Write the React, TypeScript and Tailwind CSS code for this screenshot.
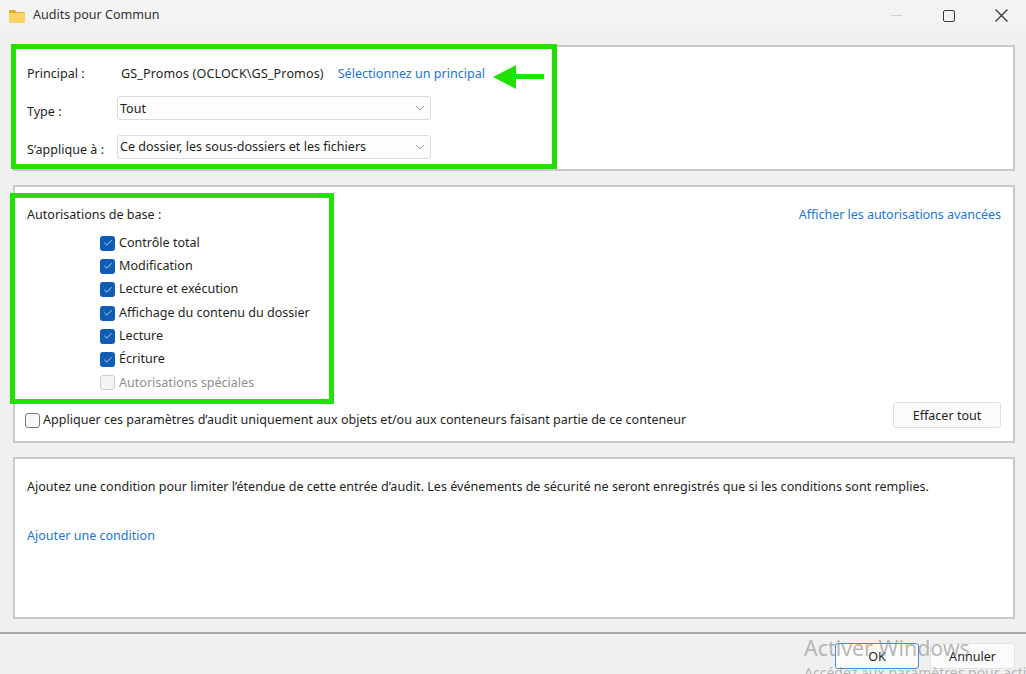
import { Check, ChevronDown } from 'lucide-react';

const permissions = [
  'Contrôle total',
  'Modification',
  'Lecture et exécution',
  'Affichage du contenu du dossier',
  'Lecture',
  'Écriture',
];

function Box({ checked, disabled }: { checked?: boolean; disabled?: boolean }) {
  if (checked) {
    return (
      <span className="w-[15px] h-[15px] shrink-0 rounded-[3px] bg-[#0f5cb5] flex items-center justify-center">
        <Check className="w-[10px] h-[10px] text-[#dbe9f8]" strokeWidth={2} />
      </span>
    );
  }
  return (
    <span
      className={`w-[15px] h-[15px] shrink-0 rounded-[3px] border ${
        disabled ? 'border-[#cfcfcf] bg-[#f4f4f4]' : 'border-[#7a7a7a] bg-[#f7f7f7]'
      }`}
    />
  );
}

function Select({ value }: { value: string }) {
  return (
    <div className="w-[314px] h-[24px] flex items-center justify-between pl-[2px] pr-[3px] bg-[#fdfdfd] border border-[#dcdcdc] rounded-[3px]">
      <span className="pt-[2px]">{value}</span>
      <ChevronDown className="w-[14px] h-[14px] text-[#6b6b6b]" strokeWidth={1.3} />
    </div>
  );
}

export default function App() {
  return (
    <div className="relative w-[1026px] h-[674px] overflow-hidden flex flex-col bg-[#f0f0f0] text-[#1f1f1f] text-[12.55px] font-['Noto_Sans',sans-serif]">
      {/* Title bar */}
      <div className="h-[31px] shrink-0 flex items-center bg-[#f3f3f3] pl-[9px]">
        <svg width="16" height="14" viewBox="0 0 16 14" className="shrink-0">
          <path d="M0 2a1 1 0 0 1 1-1h5l1.5 2H15a1 1 0 0 1 1 1v1H0z" fill="#e8a92f" />
          <path d="M0 4h16v9a1 1 0 0 1-1 1H1a1 1 0 0 1-1-1z" fill="#fbd265" />
        </svg>
        <span className="ml-[8px] -mt-[1px] text-[#333333]">Audits pour Commun</span>
        <div className="ml-auto flex items-center pr-[18px]">
          <span className="w-[11px] h-px bg-[#cfcfcf]" />
          <span className="ml-[41px] w-[12px] h-[12px] border-[1.5px] border-[#3a3a3a] rounded-[2px]" />
          <svg width="13" height="13" viewBox="0 0 13 13" className="ml-[40px]" stroke="#333333" strokeWidth="1.2">
            <path d="M0.5 0.5l12 12M12.5 0.5l-12 12" />
          </svg>
        </div>
      </div>

      <div className="flex flex-col gap-[14px] pl-[13px] pr-[11px] pt-[14px]">
        {/* Principal, type and scope */}
        <section className="h-[126px] bg-white border-2 border-[#c8c8c8] px-[12px] pt-[17px]">
          <div className="h-[20px] flex items-center">
            <span className="w-[90px]">Principal :</span>
            <span className="ml-[4px] tracking-[0.13px]">GS_Promos (OCLOCK\GS_Promos)</span>
            <span className="ml-[14px] text-[#1f76cc]">Sélectionnez un principal</span>
          </div>
          <div className="mt-[12px] flex">
            <span className="w-[90px] pt-[7px]">Type :</span>
            <Select value="Tout" />
          </div>
          <div className="mt-[13px] flex">
            <span className="w-[90px] pt-[6px] whitespace-nowrap">S’applique à :</span>
            <Select value="Ce dossier, les sous-dossiers et les fichiers" />
          </div>
        </section>

        {/* Permissions */}
        <section className="h-[258px] bg-white border-2 border-[#c8c8c8] px-[12px] pt-[18px]">
          <div className="h-[20px] flex items-center justify-between">
            <span>Autorisations de base :</span>
            <span className="text-[#1f76cc] tracking-[-0.05px]">Afficher les autorisations avancées</span>
          </div>
          <div className="mt-[6.5px] pl-[73px] flex flex-col">
            {permissions.map((label) => (
              <div key={label} className="h-[23.3px] flex items-center gap-[4px]">
                <Box checked />
                <span>{label}</span>
              </div>
            ))}
            <div className="h-[23.3px] flex items-center gap-[4px] text-[#8f8f8f]">
              <Box disabled />
              <span>Autorisations spéciales</span>
            </div>
          </div>
          <div className="mt-[7.5px] -ml-[2px] h-[26px] flex items-center justify-between">
            <div className="mt-[10px] flex items-center gap-[3px]">
              <Box />
              <span>Appliquer ces paramètres d’audit uniquement aux objets et/ou aux conteneurs faisant partie de ce conteneur</span>
            </div>
            <button className="w-[108px] h-[26px] pt-[3px] bg-[#fbfbfb] border border-[#dedede] rounded-[3px]">Effacer tout</button>
          </div>
        </section>

        {/* Condition */}
        <section className="h-[162px] bg-white border-2 border-[#c8c8c8] px-[12px] pt-[18px]">
          <div className="h-[20px] flex items-center">
            Ajoutez une condition pour limiter l’étendue de cette entrée d’audit. Les événements de sécurité ne seront enregistrés que si les conditions sont remplies.
          </div>
          <div className="mt-[29px] h-[20px] flex items-center text-[#1f76cc]">Ajouter une condition</div>
        </section>
      </div>

      {/* Footer */}
      <div className="mt-[13px] flex-1 border-t-2 border-[#ababab] pt-[9px] pr-[11px] flex justify-end gap-[11px]">
        <button className="w-[84px] h-[26px] pt-[3px] bg-[#fbfbfb] border border-[#3f8fd8] rounded-[3px]">OK</button>
        <button className="w-[85px] h-[26px] pt-[3px] bg-[#fbfbfb] border border-[#e4e4e4] rounded-[3px]">Annuler</button>
      </div>

      {/* Annotations drawn over the dialog */}
      <div className="absolute left-[11px] top-[44px] w-[546px] h-[125px] border-[5px] border-[#22e000]" />
      <div className="absolute left-[10px] top-[193px] w-[324px] h-[211px] border-[5px] border-[#22e000]" />
      <svg width="52" height="24" viewBox="0 0 52 24" className="absolute left-[492px] top-[65px]">
        <path d="M1 12L24 0v9h28v5H24v10z" fill="#22e000" />
      </svg>

      {/* Activation watermark */}
      <div className="absolute left-[804px] top-[633px] w-[222px] overflow-hidden whitespace-nowrap text-[#8a8a8a]/60 pointer-events-none">
        <div className="text-[21.4px] leading-[30px]">Activer Windows</div>
        <div className="text-[14px] leading-[20px]">Accédez aux paramètres pour activer Windows.</div>
      </div>
    </div>
  );
}
